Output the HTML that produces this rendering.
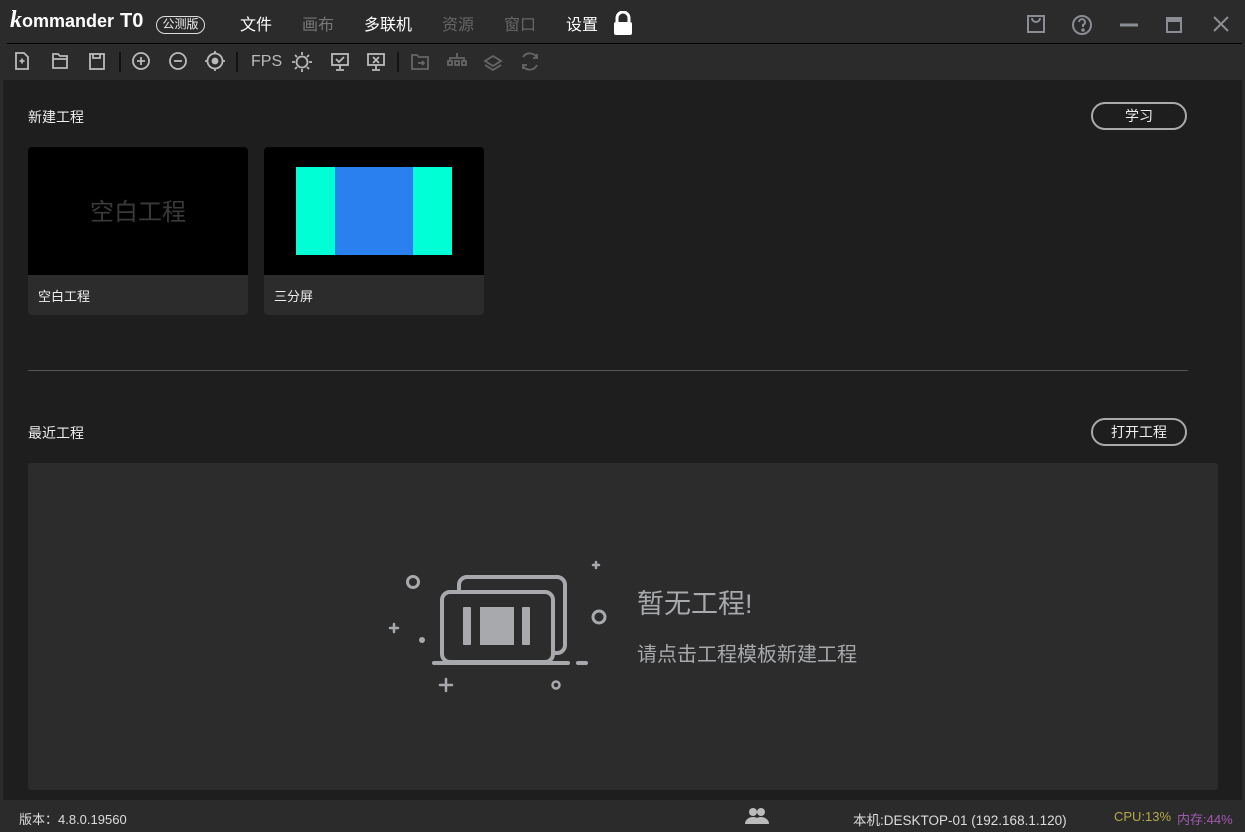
<!DOCTYPE html>
<html><head><meta charset="utf-8"><style>
*{margin:0;padding:0;box-sizing:border-box}
body{width:1245px;height:832px;background:#2b2b2b;font-family:"Liberation Sans","Noto Sans CJK SC",sans-serif;position:relative;overflow:hidden;color:#ddd}
.a{position:absolute}
.menu{top:11px;font-size:16px}
.btn{position:absolute;border:2px solid #aaa;border-radius:15px;color:#eee;font-size:14px;text-align:center;line-height:24px}
</style></head><body>
<div class="a" style="left:10px;top:7px;font-size:24px;font-weight:bold;color:#fff;font-family:'Liberation Serif',serif;font-style:italic">k<span style="font-family:'Liberation Sans';font-style:normal;font-size:18px">ommander</span> <span style="font-family:'Liberation Sans';font-style:normal;font-size:20px">T0</span></div>
<div class="a" style="left:156px;top:16px;width:49px;height:18px;border:1.5px solid #ddd;border-radius:9px;font-size:12px;line-height:15px;text-align:center;color:#eee">公测版</div>
<div class="a menu" style="left:240px;color:#fff">文件</div>
<div class="a menu" style="left:302px;color:#777">画布</div>
<div class="a menu" style="left:364px;color:#fff">多联机</div>
<div class="a menu" style="left:442px;color:#666">资源</div>
<div class="a menu" style="left:504px;color:#666">窗口</div>
<div class="a menu" style="left:566px;color:#fff">设置</div>
<svg class="a" style="left:612px;top:11px" width="22" height="24"><path d="M5 11V7a6 6 0 0 1 12 0v4" stroke="#fff" stroke-width="3" fill="none"/><rect x="2" y="11" width="18" height="13" rx="2" fill="#fff"/></svg>
<svg class="a" style="left:1020px;top:10px" width="220" height="30" fill="none" stroke="#8a8d93" stroke-width="2">
<rect x="8" y="6" width="16" height="16"/><path d="M12 8a4 4 0 0 0 8 0"/>
<circle cx="62" cy="15" r="9"/><path d="M59 12a3 3 0 1 1 4 3v2"/><circle cx="63" cy="20" r=".8" fill="#8a8d93"/>
<path d="M100 15h18" stroke-width="3"/>
<rect x="147" y="8" width="14" height="14"/><path d="M147 10h14" stroke-width="4"/>
<path d="M194 7l14 14M208 7l-14 14"/>
</svg>
<div class="a" style="left:7px;top:43px;width:1235px;height:1px;background:#000"></div>
<svg class="a" style="left:0;top:44px" width="560" height="36" fill="none" stroke="#bbb" stroke-width="1.8">
<path d="M16 9h8l4 4v12H16z M19.5 17h5M22 14.5v5"/>
<path d="M53 10h5l2 2h7v12H53z M53 15h14"/>
<rect x="90" y="10" width="14" height="15"/><path d="M93 10v4h7v-4"/>
<path d="M120 8v20" stroke="#111"/>
<circle cx="141" cy="17" r="8"/><path d="M137 17h8M141 13v8"/>
<circle cx="178" cy="17" r="8"/><path d="M174 17h8"/>
<circle cx="215" cy="17" r="7.5"/><circle cx="215" cy="17" r="2.5" fill="#bbb"/><path d="M215 7v3M215 24v3M205 17h3M222 17h3"/>
<path d="M237 8v20" stroke="#111"/>
<circle cx="302" cy="18" r="5.5"/><path d="M302 8v3M302 25v3M292 18h3M309 18h3M295 11l2 2M307 23l2 2M309 11l-2 2M295 25l2-2"/>
<rect x="332" y="10" width="16" height="11"/><path d="M340 21v4M336 26h8M336 15l3 3 5-5"/>
<rect x="368" y="10" width="16" height="11"/><path d="M376 21v4M372 26h8M373 13l6 6M379 13l-6 6"/>
<path d="M398 8v20" stroke="#111"/>
<g stroke="#666"><path d="M412 11h5l2 2h9v12h-16z M418 19h6M422 17l2 2-2 2"/>
<path d="M457 9v5M450 16v-2h14v2M448 17h4v4h-4zM455 17h4v4h-4zM462 17h4v4h-4z" /><path d="M485 17l8-5 8 5-8 5z M485 21l8 5 8-5"/>
<path d="M523 13a8 8 0 0 1 14 1M537 21a8 8 0 0 1-14 1M537 10v4h-4M523 25v-4h4"/></g>
</svg>
<div class="a" style="left:251px;top:53px;font-size:16px;color:#bbb">FPS</div>
<div class="a" style="left:3px;top:80px;width:1239px;height:720px;background:#1e1e1e"></div>
<div class="a" style="left:28px;top:107px;font-size:14px;color:#eee">新建工程</div>
<div class="btn" style="left:1091px;top:102px;width:96px;height:28px">学习</div>
<div class="a" style="left:28px;top:147px;width:220px;height:168px;background:#2c2c2c;border-radius:4px;overflow:hidden">
<div style="height:128px;background:#000;color:#3a3a3a;font-size:24px;text-align:center;line-height:132px">空白工程</div>
<div style="padding:11px 10px;font-size:13px;color:#eee">空白工程</div></div>
<div class="a" style="left:264px;top:147px;width:220px;height:168px;background:#2c2c2c;border-radius:4px;overflow:hidden">
<div style="height:128px;background:#000;position:relative"><div class="a" style="left:32px;top:20px;width:156px;height:88px;background:#00ffd5"><div class="a" style="left:39px;top:0;width:78px;height:88px;background:#2a80ee"></div></div></div>
<div style="padding:11px 10px;font-size:13px;color:#eee">三分屏</div></div>
<div class="a" style="left:28px;top:370px;width:1160px;height:1px;background:#555"></div>
<div class="a" style="left:28px;top:423px;font-size:14px;color:#eee">最近工程</div>
<div class="btn" style="left:1091px;top:418px;width:96px;height:28px">打开工程</div>
<div class="a" style="left:28px;top:463px;width:1190px;height:327px;background:#2c2c2c;border-radius:3px"></div>
<svg class="a" style="left:380px;top:550px" width="240" height="150" fill="none" stroke="#a7a9ac" stroke-width="4" stroke-linecap="round">
<circle cx="33" cy="32" r="5.5" stroke-width="3"/><path d="M10 78h8M14 74v8M213 15h6M216 12v6M60 135h12M66 129v12" stroke-width="2.5"/>
<circle cx="42" cy="90" r="3" fill="#a7a9ac" stroke="none"/><circle cx="219" cy="67" r="6" stroke-width="3"/><circle cx="176" cy="135" r="3.5" stroke-width="2.5"/>
<path d="M79 41v-6a8 8 0 0 1 8-8h90a8 8 0 0 1 8 8v60a8 8 0 0 1-8 8h-4"/>
<rect x="62" y="42" width="111" height="70" rx="8" fill="#2c2c2c"/>
<path d="M54 113h134M198 113h8"/>
<rect x="83" y="57" width="8" height="38" rx="1" fill="#a7a9ac" stroke="none"/><rect x="100" y="57" width="34" height="38" fill="#a7a9ac" stroke="none"/><rect x="142" y="57" width="8" height="38" rx="1" fill="#a7a9ac" stroke="none"/>
</svg>
<div class="a" style="left:637px;top:582px;font-size:27px;color:#a7a9ac">暂无工程!</div>
<div class="a" style="left:637px;top:638px;font-size:20px;color:#a7a9ac">请点击工程模板新建工程</div>
<div class="a" style="left:19px;top:809px;font-size:13px;color:#ddd">版本：4.8.0.19560</div>
<svg class="a" style="left:745px;top:807px" width="24" height="18" fill="#bbb"><circle cx="8" cy="5" r="4"/><circle cx="16" cy="5" r="4"/><path d="M0 17a8 7 0 0 1 16 0zM8 17a8 7 0 0 1 16 0z"/></svg>
<div class="a" style="left:853px;top:809px;font-size:13.5px;color:#ddd">本机:DESKTOP-01 (192.168.1.120)</div>
<div class="a" style="left:1114px;top:809px;font-size:13px;color:#b5a94a">CPU:13%</div>
<div class="a" style="left:1177px;top:809px;font-size:13px;color:#a05ab0">内存:44%</div>
</body></html>
